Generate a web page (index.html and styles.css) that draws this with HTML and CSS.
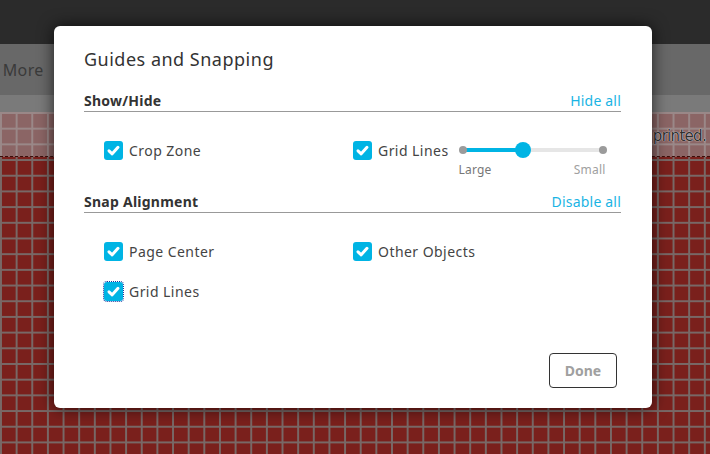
FILE: index.html
```html
<!DOCTYPE html>
<html lang="en">
<head>
    <meta charset="UTF-8">
    <meta name="viewport" content="width=device-width, initial-scale=1.0">
    <title> Guides and Snapping </title>
    <link rel="stylesheet" href="styles.css">
</head>
<body>
    <div id = "page">
        <div class = "topbar"></div>
        <div class = "toolbar"> <span class = "tool_text">Add More</span> </div>
        <div class = "band"></div>
        <div class = "canvas">
            <div class = "bleed"> <span class = "bleed_text">printed.</span> </div>
        </div>
    </div>

    <div class = "modal">
        <div class = "modal_title"> Guides and Snapping </div>

        <div class = "sec_head">
            <span class = "sec_name">Show/Hide</span>
            <a class = "sec_link">Hide all</a>
        </div>
        <div class = "opt_grid show_grid">
            <label class = "opt">
                <span class = "check"><svg viewBox="0 0 19 19"><path d="M5 9.8 L8.2 12.8 L14 6.3"/></svg></span>
                Crop Zone
            </label>
            <div class = "opt_slider">
                <label class = "opt">
                    <span class = "check"><svg viewBox="0 0 19 19"><path d="M5 9.8 L8.2 12.8 L14 6.3"/></svg></span>
                    Grid Lines
                </label>
                <div class = "slider">
                    <div class = "track">
                        <div class = "track_fill"></div>
                        <span class = "dot dot_left"></span>
                        <span class = "dot dot_right"></span>
                        <span class = "knob"></span>
                    </div>
                    <div class = "slider_labels">
                        <span>Large</span>
                        <span class = "faint">Small</span>
                    </div>
                </div>
            </div>
        </div>

        <div class = "sec_head snap_head">
            <span class = "sec_name">Snap Alignment</span>
            <a class = "sec_link">Disable all</a>
        </div>
        <div class = "opt_grid snap_grid">
            <label class = "opt">
                <span class = "check"><svg viewBox="0 0 19 19"><path d="M5 9.8 L8.2 12.8 L14 6.3"/></svg></span>
                Page Center
            </label>
            <label class = "opt">
                <span class = "check"><svg viewBox="0 0 19 19"><path d="M5 9.8 L8.2 12.8 L14 6.3"/></svg></span>
                Other Objects
            </label>
            <label class = "opt">
                <span class = "check focused"><svg viewBox="0 0 19 19"><path d="M5 9.8 L8.2 12.8 L14 6.3"/></svg></span>
                Grid Lines
            </label>
        </div>

        <div class = "modal_foot">
            <button class = "done_button">Done</button>
        </div>
    </div>
</body>
</html>
```

FILE: styles.css
```css
* {
    margin: 0px;
    padding: 0px;
    box-sizing: border-box;
}

body {
    width: 710px;
    height: 454px;
    overflow: hidden;
    font-family: "Noto Sans", "Open Sans", sans-serif;
    background-color: #7a201c;
}

#page {
    height: 454px;
    display: flex;
    flex-direction: column;
}

.topbar {
    height: 44px;
    background-color: #2b2b2b;
}

.toolbar {
    height: 51px;
    background-color: #686868;
    display: flex;
    align-items: center;
    overflow: hidden;
}

.tool_text {
    margin-left: -33px;
    font-size: 16px;
    letter-spacing: 0.4px;
    color: #3a3a3a;
    white-space: nowrap;
}

.band {
    height: 17px;
    background-color: #7a7a7a;
}

/* page with grid lines */
.canvas {
    flex: 1;
    background-color: #7a201c;
    background-image:
        linear-gradient(90deg, #786866 2px, transparent 2px),
        linear-gradient(#786866 2px, transparent 2px);
    background-size: 15.65px 15.7px;
    background-position: 0px 0px;
}

.bleed {
    height: 45px;
    background-color: #8b6565;
    background-image:
        linear-gradient(90deg, #9a8888 2px, transparent 2px),
        linear-gradient(#9a8888 2px, transparent 2px);
    background-size: 15.65px 15.7px;
    border-bottom: 1px dashed #3a0e0b;
    display: flex;
    justify-content: flex-end;
    align-items: center;
    padding-right: 4px;
    padding-top: 4px;
}

.bleed_text {
    font-family: "DejaVu Sans", sans-serif;
    font-size: 15px;
    color: #2e2e2e;
    letter-spacing: -0.7px;
    text-shadow: 0 0 1px #e0e0e0, 0 0 1px #e0e0e0;
}

/* dialog over the page */
.modal {
    position: absolute;
    left: 54px;
    top: 26px;
    width: 598px;
    height: 382px;
    background-color: #ffffff;
    border-radius: 6px;
    box-shadow: 0 0 16px rgba(0, 0, 0, 0.7);
    padding: 21px 31px 20px 30px;
    display: flex;
    flex-direction: column;
    color: #444444;
}

.modal_title {
    font-size: 18px;
    letter-spacing: 0.5px;
    line-height: 24px;
    color: #333333;
    margin-bottom: 22px;
}

.sec_head {
    height: 19px;
    display: flex;
    justify-content: space-between;
    align-items: flex-end;
    border-bottom: 1px solid #999999;
    padding-bottom: 1px;
}

.sec_name {
    font-size: 14px;
    letter-spacing: 0.25px;
    font-weight: bold;
    color: #333333;
}

.sec_link {
    font-size: 14px;
    letter-spacing: 0.2px;
    color: #1ab4e4;
    cursor: pointer;
}

.snap_head {
    margin-top: 17px;
}

.opt_grid {
    display: grid;
    grid-template-columns: 249px 1fr;
    padding-left: 20px;
}

.show_grid {
    margin-top: 28px;
}

.snap_grid {
    margin-top: 28px;
    row-gap: 20px;
}

.opt {
    display: flex;
    align-items: center;
    height: 20px;
    font-size: 14px;
    letter-spacing: 0.45px;
    color: #444444;
    cursor: pointer;
}

.check {
    width: 19px;
    height: 19px;
    border-radius: 3px;
    background-color: #00b4e4;
    margin-right: 6px;
    display: inline-flex;
}

.check svg {
    width: 19px;
    height: 19px;
}

.check path {
    fill: none;
    stroke: #ffffff;
    stroke-width: 3px;
    stroke-linecap: round;
    stroke-linejoin: round;
}

.check.focused {
    outline: 1px dotted #1a3aa0;
    outline-offset: 0px;
}

.opt_slider {
    display: flex;
    align-items: flex-start;
}

.slider {
    width: 148px;
    margin-left: 10px;
    margin-top: 2px;
}

.track {
    position: relative;
    height: 16px;
}

.track::before {
    content: "";
    position: absolute;
    left: 4px;
    right: 4px;
    top: 6px;
    height: 4px;
    background-color: #e6e6e6;
    border-radius: 2px;
}

.track_fill {
    position: absolute;
    left: 4px;
    top: 6px;
    width: 60px;
    height: 4px;
    background-color: #00b4e4;
}

.dot {
    position: absolute;
    top: 4px;
    width: 8px;
    height: 8px;
    border-radius: 50%;
    background-color: #9b9b9b;
}

.dot_left {
    left: 0px;
}

.dot_right {
    right: 0px;
}

.knob {
    position: absolute;
    left: 56px;
    top: 0px;
    width: 16px;
    height: 16px;
    border-radius: 50%;
    background-color: #00b4e4;
}

.slider_labels {
    display: flex;
    justify-content: space-between;
    margin-top: 5px;
    padding-right: 1px;
    font-size: 12px;
    letter-spacing: 0.2px;
    line-height: 14px;
    color: #777777;
}

.faint {
    color: #a0a0a0;
}

.modal_foot {
    margin-top: auto;
    display: flex;
    justify-content: flex-end;
    padding-right: 4px;
}

.done_button {
    width: 68px;
    height: 35px;
    background-color: #ffffff;
    border: 1px solid #333333;
    border-radius: 4px;
    font-family: "Noto Sans", "Open Sans", sans-serif;
    font-size: 14px;
    font-weight: bold;
    color: #a0a0a0;
}
```
